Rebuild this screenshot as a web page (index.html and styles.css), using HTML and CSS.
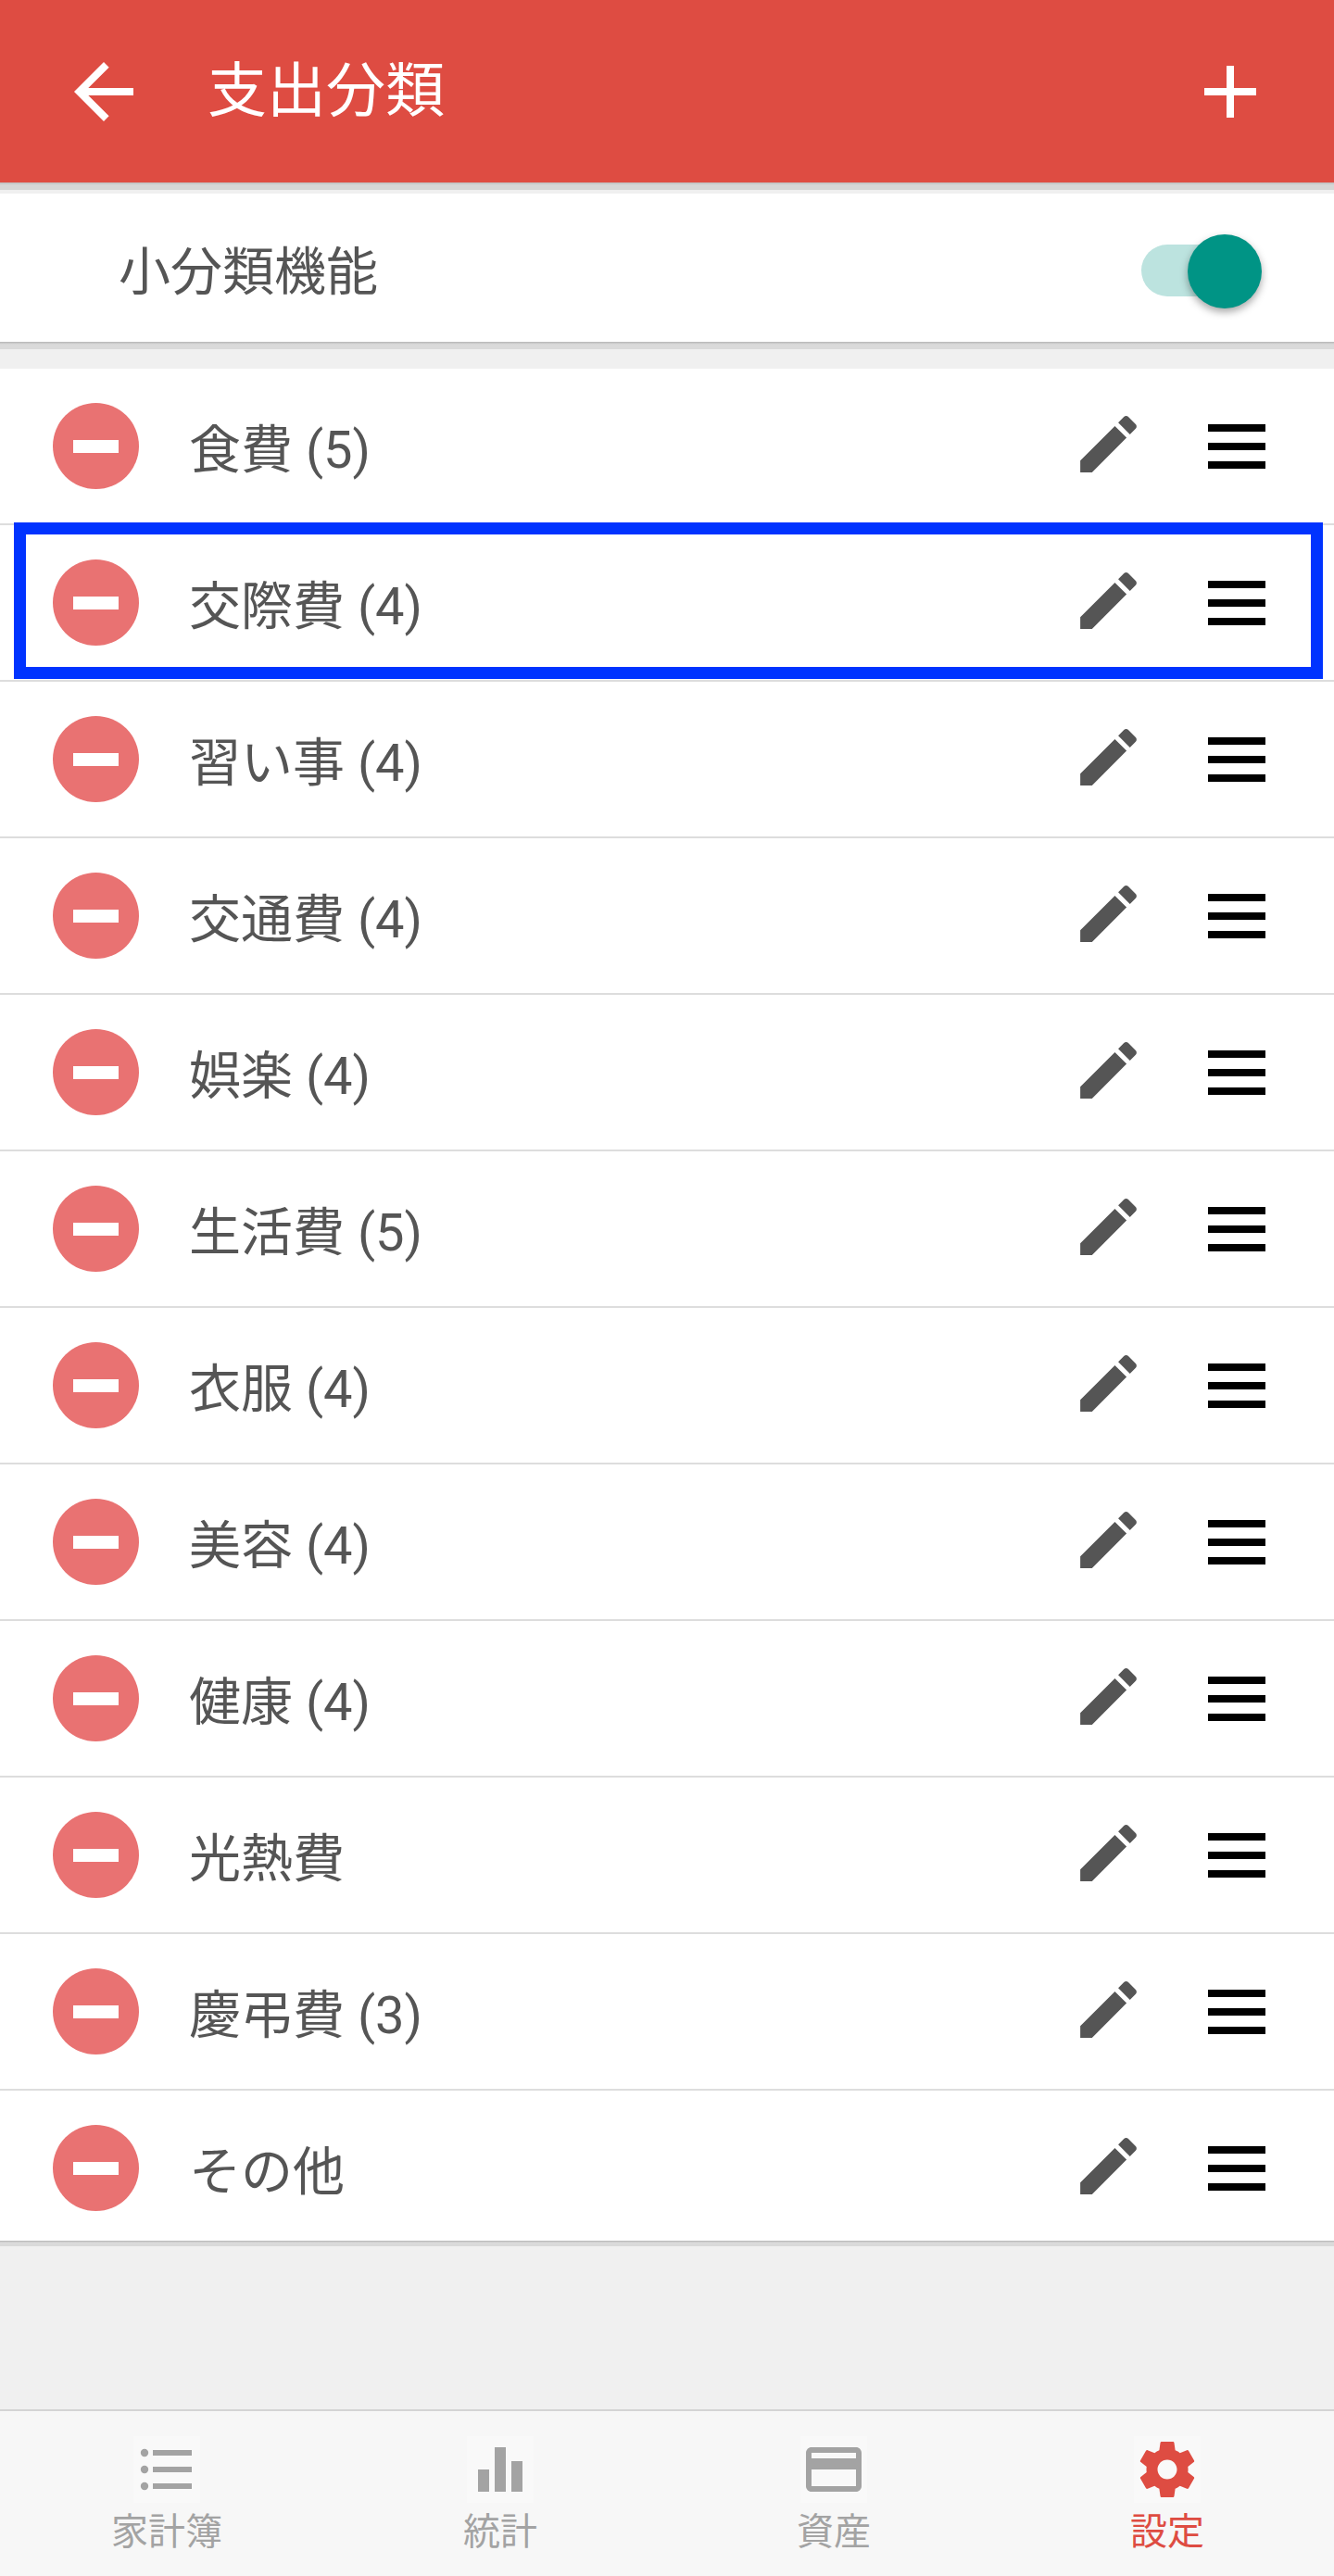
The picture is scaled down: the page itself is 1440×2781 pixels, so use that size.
FILE: index.html
```html
<!DOCTYPE html>
<html lang="ja">
  <head>
    <meta charset="UTF-8" />
    <meta name="viewport" content="width=device-width, initial-scale=1.0" />
    <title>支出分類</title>
    <link rel="stylesheet" href="styles.css">
  </head>
  <body>
    <svg class="sprite" xmlns="http://www.w3.org/2000/svg">
      <symbol id="icon-edit" viewBox="0 0 24 24">
        <path d="M3 17.25V21h3.75L17.81 9.94l-3.75-3.75L3 17.25zM20.71 7.04c.39-.39.39-1.02 0-1.41l-2.34-2.34c-.39-.39-1.02-.39-1.41 0l-1.83 1.83 3.75 3.75 1.83-1.83z" />
      </symbol>
    </svg>

    <div class="page">
      <header class="toolbar">
        <svg class="toolbar-icon" viewBox="0 0 24 24"><path d="M20 11H7.83l5.59-5.59L12 4l-8 8 8 8 1.41-1.41L7.83 13H20v-2z" /></svg>
        <h1 class="toolbar-title">支出分類</h1>
        <svg class="toolbar-icon" viewBox="0 0 24 24"><path d="M19 13h-6v6h-2v-6H5v-2h6V5h2v6h6v2z" /></svg>
      </header>
      <div class="shade shade-toolbar"></div>

      <section class="setting">
        <span class="setting-label">小分類機能</span>
        <div class="switch">
          <div class="switch-track"></div>
          <div class="switch-knob"></div>
        </div>
      </section>
      <div class="shade"></div>

      <ul class="category-list">
        <li class="category">
          <span class="remove"></span>
          <span class="category-name">食費 (5)</span>
          <svg class="edit"><use href="#icon-edit" /></svg>
          <span class="drag"></span>
        </li>
        <li class="category">
          <span class="remove"></span>
          <span class="category-name">交際費 (4)</span>
          <svg class="edit"><use href="#icon-edit" /></svg>
          <span class="drag"></span>
          <div class="highlight"></div>
        </li>
        <li class="category">
          <span class="remove"></span>
          <span class="category-name">習い事 (4)</span>
          <svg class="edit"><use href="#icon-edit" /></svg>
          <span class="drag"></span>
        </li>
        <li class="category">
          <span class="remove"></span>
          <span class="category-name">交通費 (4)</span>
          <svg class="edit"><use href="#icon-edit" /></svg>
          <span class="drag"></span>
        </li>
        <li class="category">
          <span class="remove"></span>
          <span class="category-name">娯楽 (4)</span>
          <svg class="edit"><use href="#icon-edit" /></svg>
          <span class="drag"></span>
        </li>
        <li class="category">
          <span class="remove"></span>
          <span class="category-name">生活費 (5)</span>
          <svg class="edit"><use href="#icon-edit" /></svg>
          <span class="drag"></span>
        </li>
        <li class="category">
          <span class="remove"></span>
          <span class="category-name">衣服 (4)</span>
          <svg class="edit"><use href="#icon-edit" /></svg>
          <span class="drag"></span>
        </li>
        <li class="category">
          <span class="remove"></span>
          <span class="category-name">美容 (4)</span>
          <svg class="edit"><use href="#icon-edit" /></svg>
          <span class="drag"></span>
        </li>
        <li class="category">
          <span class="remove"></span>
          <span class="category-name">健康 (4)</span>
          <svg class="edit"><use href="#icon-edit" /></svg>
          <span class="drag"></span>
        </li>
        <li class="category">
          <span class="remove"></span>
          <span class="category-name">光熱費</span>
          <svg class="edit"><use href="#icon-edit" /></svg>
          <span class="drag"></span>
        </li>
        <li class="category">
          <span class="remove"></span>
          <span class="category-name">慶弔費 (3)</span>
          <svg class="edit"><use href="#icon-edit" /></svg>
          <span class="drag"></span>
        </li>
        <li class="category">
          <span class="remove"></span>
          <span class="category-name">その他</span>
          <svg class="edit"><use href="#icon-edit" /></svg>
          <span class="drag"></span>
        </li>
      </ul>
      <div class="shade shade-list"></div>

      <div class="spacer"></div>

      <nav class="tabbar">
        <div class="tab">
          <svg class="tab-icon" viewBox="0 0 24 24">
            <circle cx="4" cy="6" r="1.4" />
            <circle cx="4" cy="12" r="1.4" />
            <circle cx="4" cy="18" r="1.4" />
            <path d="M7 5h14v2H7zM7 11h14v2H7zM7 17h14v2H7z" />
          </svg>
          <span class="tab-label">家計簿</span>
        </div>
        <div class="tab">
          <svg class="tab-icon" viewBox="0 0 24 24"><path d="M4 12h4v8H4zM10 4h4v16h-4zM16 9h4v11h-4z" /></svg>
          <span class="tab-label">統計</span>
        </div>
        <div class="tab">
          <svg class="tab-icon" viewBox="0 0 24 24"><path d="M20 4H4c-1.11 0-1.99.89-1.99 2L2 18c0 1.11.89 2 2 2h16c1.11 0 2-.89 2-2V6c0-1.11-.89-2-2-2zm0 14H4v-6h16v6zm0-10H4V6h16v2z" /></svg>
          <span class="tab-label">資産</span>
        </div>
        <div class="tab tab-active">
          <svg class="tab-icon" viewBox="0 0 24 24"><path d="M19.43 12.98c.04-.32.07-.64.07-.98s-.03-.66-.07-.98l2.11-1.65c.19-.15.24-.42.12-.64l-2-3.46c-.12-.22-.39-.3-.61-.22l-2.49 1c-.52-.4-1.08-.73-1.69-.98l-.38-2.65C14.46 2.18 14.25 2 14 2h-4c-.25 0-.46.18-.49.42l-.38 2.65c-.61.25-1.17.59-1.69.98l-2.49-1c-.23-.09-.49 0-.61.22l-2 3.46c-.13.22-.07.49.12.64l2.11 1.65c-.04.32-.07.65-.07.98s.03.66.07.98l-2.11 1.65c-.19.15-.24.42-.12.64l2 3.46c.12.22.39.3.61.22l2.49-1c.52.4 1.08.73 1.69.98l.38 2.65c.03.24.24.42.49.42h4c.25 0 .46-.18.49-.42l.38-2.65c.61-.25 1.17-.59 1.69-.98l2.49 1c.23.09.49 0 .61-.22l2-3.46c.12-.22.07-.49-.12-.64l-2.11-1.65zM12 15.5c-1.93 0-3.5-1.57-3.5-3.5s1.57-3.5 3.5-3.5 3.5 1.57 3.5 3.5-1.57 3.5-3.5 3.5z" /></svg>
          <span class="tab-label">設定</span>
        </div>
      </nav>
    </div>
  </body>
</html>
```

FILE: styles.css
```css
:root {
  --primary-color: #de4c42;
  --background-color: #f0f0f0;
  --text-color: #555;
  --tab-color: #a3a3a3;
}

* {
  box-sizing: border-box;
}

body {
  margin: 0;
  font-family: Roboto, "Noto Sans CJK JP", sans-serif;
  background-color: var(--background-color);
  color: var(--text-color);
}

.sprite {
  display: none;
}

.page {
  display: flex;
  flex-direction: column;
  min-height: 100vh;
}

/* toolbar */
.toolbar {
  display: flex;
  align-items: center;
  height: 197px;
  padding: 0 64px;
  background-color: var(--primary-color);
  color: white;
}

.toolbar-icon {
  width: 96px;
  height: 96px;
  fill: white;
}

.toolbar-title {
  flex: 1;
  margin: 0 0 0 64px;
  font-size: 64px;
  font-weight: 400;
  line-height: 1;
}

.shade {
  height: 8px;
  background: linear-gradient(#b4b4b4, #dadada 35%);
}

.shade-toolbar {
  margin-bottom: 4px;
  background: linear-gradient(#bdbdbd, #d6d6d6 35%);
}

.shade-list {
  height: 6px;
}

/* switch row */
.setting {
  display: flex;
  align-items: center;
  justify-content: space-between;
  height: 160px;
  padding: 0 78px 0 128px;
  background-color: white;
}

.setting-label {
  padding-top: 10px;
  font-size: 56px;
  line-height: 1;
}

.switch {
  position: relative;
  width: 130px;
  height: 80px;
  margin-top: 8px;
}

.switch-track {
  position: absolute;
  top: 11px;
  left: 0;
  width: 110px;
  height: 56px;
  border-radius: 28px;
  background-color: #bce3df;
}

.switch-knob {
  position: absolute;
  top: 0;
  right: 0;
  width: 80px;
  height: 80px;
  border-radius: 50%;
  background-color: #009485;
  box-shadow: 0 4px 8px rgba(0, 0, 0, 0.35);
}

/* list */
.category-list {
  margin: 21px 0 0;
  padding: 0;
  list-style: none;
  background-color: white;
}

.category {
  position: relative;
  display: flex;
  align-items: center;
  padding: 37px 74px 37px 57px;
  border-bottom: 2px solid #ddd;
}

.category:last-child {
  padding-bottom: 32px;
  border-bottom: none;
}

.remove {
  position: relative;
  flex: none;
  width: 93px;
  height: 93px;
  border-radius: 50%;
  background-color: #e97272;
}

.remove::after {
  content: "";
  position: absolute;
  top: 40px;
  left: 22px;
  width: 49px;
  height: 14px;
  background-color: white;
}

.category-name {
  flex: 1;
  margin-left: 54px;
  padding-top: 9px;
  font-size: 56px;
  line-height: 84px;
}

.edit {
  flex: none;
  width: 81px;
  height: 81px;
  margin-right: 67px;
  margin-bottom: 4px;
  fill: var(--text-color);
}

.drag {
  flex: none;
  width: 62px;
  height: 48px;
  margin-top: 1px;
  background: linear-gradient(#000 8px, transparent 8px, transparent 20px, #000 20px, #000 28px, transparent 28px, transparent 40px, #000 40px);
}

.highlight {
  position: absolute;
  top: -3px;
  left: 15px;
  width: 1413px;
  height: 169px;
  border: 13px solid #0033ff;
}

.spacer {
  flex: 1;
}

/* bottom tabs */
.tabbar {
  display: grid;
  grid-template-columns: repeat(4, 1fr);
  height: 180px;
  padding-top: 27px;
  border-top: 2px solid #d4d4d4;
  background-color: #f7f7f7;
}

.tab {
  display: flex;
  flex-direction: column;
  align-items: center;
  color: var(--tab-color);
}

.tab-icon {
  width: 72px;
  height: 72px;
  background-color: #f9f9f9;
  fill: var(--tab-color);
}

.tab-label {
  padding-top: 5px;
  font-size: 40px;
  line-height: 54px;
}

.tab-active {
  color: #de4c42;
}

.tab-active .tab-icon {
  fill: #de4c42;
}
```
